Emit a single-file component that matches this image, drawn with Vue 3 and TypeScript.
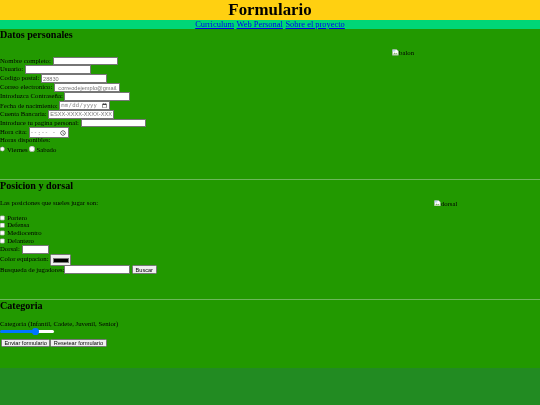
<script setup lang="ts">
interface Field { label: string; type: string; placeholder?: string }
const fields: Field[] = [
  { label: 'Nombre completo:', type: 'text' },
  { label: 'Usuario:', type: 'text' },
  { label: 'Codigo postal:', type: 'text', placeholder: '28830' },
  { label: 'Correo electronico:', type: 'email', placeholder: 'correodejemplo@gmail.com' },
  { label: 'Introduzca Contraseña:', type: 'password' },
  { label: 'Fecha de nacimiento:', type: 'date' },
  { label: 'Cuenta Bancaria:', type: 'text', placeholder: 'ESXX-XXXX-XXXX-XXXX-XXXX' },
  { label: 'Introduce tu pagina personal:', type: 'url' },
  { label: 'Hora cita:', type: 'time' },
]
const positions = ['Portero', 'Defensa', 'Mediocentro', 'Delantero']
const links = ['Curriculum', 'Web Personal', 'Sobre el proyecto']
</script>

<template>
  <div class="page">
    <header class="top"><h1>Formulario</h1></header>
    <nav class="nav">
      <a v-for="l in links" :key="l" href="#">{{ l }}</a>
    </nav>
    <main class="main">
      <section class="sec one">
        <h2>Datos personales</h2>
        <div class="pic pic-balon">
          <svg class="broken" width="16" height="16" viewBox="0 0 16 16"><path d="M1 1h10l4 4v10H1z" fill="#fff" stroke="#9aa0a6"/><path d="M2 13l4-5 3 3 2-2 3 4z" fill="#7fb069"/><path d="M2 2h6v4H2z" fill="#bcd4f6"/></svg>balon
        </div>
        <form class="fields" @submit.prevent>
          <div v-for="f in fields" :key="f.label" class="row">
            <label>{{ f.label }}</label>{{ ' ' }}<input :type="f.type" :placeholder="f.placeholder" />
          </div>
          <div class="row">Horas disponibles:</div>
          <div class="row">
            <input type="radio" name="dia" /> Viernes
            <input type="radio" name="dia" /> Sabado
          </div>
        </form>
      </section>
      <hr />
      <section class="sec two">
        <h2>Posicion y dorsal</h2>
        <div class="pic pic-dorsal">
          <svg class="broken" width="16" height="16" viewBox="0 0 16 16"><path d="M1 1h10l4 4v10H1z" fill="#fff" stroke="#9aa0a6"/><path d="M2 13l4-5 3 3 2-2 3 4z" fill="#7fb069"/><path d="M2 2h6v4H2z" fill="#bcd4f6"/></svg>dorsal
        </div>
        <p class="intro">Las posiciones que sueles jugar son:</p>
        <div v-for="p in positions" :key="p" class="check">
          <input type="checkbox" /> {{ p }}
        </div>
        <div class="row">Dorsal: <input class="num" type="number" /></div>
        <div class="row">Color equipacion: <input type="color" value="#000000" /></div>
        <div class="row">Busqueda de jugadores:<input type="search" /> <button type="button">Buscar</button></div>
      </section>
      <hr />
      <section class="sec three">
        <h2>Categoria</h2>
        <p class="intro">Categoria (Infantil, Cadete, Juvenil, Senior)</p>
        <input class="range" type="range" min="0" max="3" value="2" />
        <div class="btns">
          <button type="button">Enviar formulario</button>
          <button type="button">Resetear formulario</button>
        </div>
      </section>
    </main>
  </div>
</template>

<style scoped>
.page {
  zoom: 0.421875;
  font-family: "Liberation Serif", serif;
  font-size: 16px;
  color: #000;
  height: 960px;
  display: flex;
  flex-direction: column;
  filter: blur(1px);
}
.top {
  background: #ffd011;
  height: 47px;
  display: flex;
  align-items: center;
  justify-content: center;
}
h1 { margin: 0; font-size: 40px; line-height: 46px; }
.nav {
  background: #00d677;
  height: 22px;
  line-height: 20px;
  text-align: center;
  font-size: 20px;
}
.nav a { color: #0000ee; margin: 0 3px; text-decoration: underline; }
.main {
  background: #229900;
  height: 803px;
}
h2 { margin: 0; font-size: 24px; line-height: 27px; }
.sec { position: relative; }
.one { height: 355px; }
.two { height: 283px; }
.three { height: 161px; }
hr { margin: 0; border: 0; height: 2px; background: #6db85a; }
.fields { margin-top: 38px; }
.row { line-height: 21px; height: 21px; white-space: nowrap; }
input[type="text"], input[type="email"], input[type="password"], input[type="url"], input[type="search"] {
  width: 156px;
  box-sizing: border-box;
}
input[type="email"] { padding-left: 8px; }
input[type="date"] { width: 119px; box-sizing: border-box; }
input[type="time"] { width: 95px; box-sizing: border-box; }
input[type="date"]::-webkit-datetime-edit, input[type="time"]::-webkit-datetime-edit { color: #8a8a8a; }
.one .row input[type="radio"] { margin: 3px 0 0 0; }
.pic { position: absolute; display: flex; align-items: center; }
.pic-balon { left: 930px; top: 47px; }
.pic-dorsal { left: 1029px; top: 47px; }
.broken { flex: none; }
.intro { margin: 0; }
.two .intro { margin-top: 18px; height: 36px; }
.three .intro { margin-top: 20px; }
.check { line-height: 18px; height: 18px; }
.check input { margin: 0; vertical-align: -2px; }
.num { width: 64px; box-sizing: border-box; }
.two .row input[type="color"] { vertical-align: middle; }
.two .row { height: 24px; line-height: 24px; }
.range {
  display: block;
  appearance: none;
  -webkit-appearance: none;
  width: 129px;
  height: 18px;
  margin: 2px 0 0;
  padding: 0;
  background:
    repeating-linear-gradient(90deg, #6db85a 0 1px, transparent 1px 37.67px) 8px 100% / 115px 3px no-repeat;
}
.range::-webkit-slider-runnable-track {
  height: 8px;
  border-radius: 4px;
  background: linear-gradient(90deg, #0075ff 0 66%, #fff 66% 100%);
}
.range::-webkit-slider-thumb {
  -webkit-appearance: none;
  width: 16px;
  height: 16px;
  margin-top: -4px;
  border-radius: 50%;
  background: #0075ff;
}
.btns { margin-top: 8px; }
.btns button:first-child { margin-left: 2px; }
</style>

<style>
html, body { margin: 0; background: #228b22; }
</style>
